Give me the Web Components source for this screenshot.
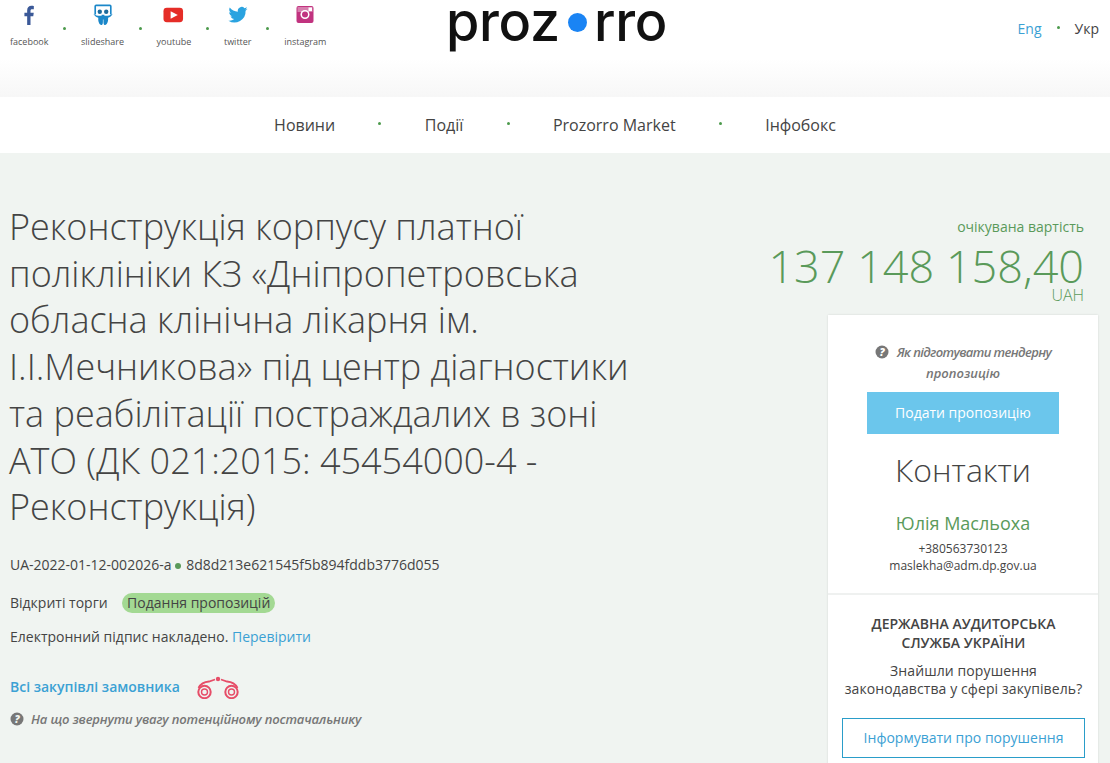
<!doctype html>
<html lang="uk">
<head>
<meta charset="utf-8">
<title>Prozorro</title>
<style>
html, body { margin: 0; height: 763px; overflow: hidden; }
body { font-family: "Open Sans", "Noto Sans", sans-serif; color: #444; background: #f0f4f1; }
</style>
</head>
<body>
<pz-header></pz-header>
<pz-nav></pz-nav>
<pz-page>
    <pz-tender></pz-tender>
    <pz-side slot="side"></pz-side>
</pz-page>

<script>
const ICONS = {
    facebook: `<svg width="20" height="24" viewBox="0 0 24 24"><path fill="#3b5998" d="M13.8 24V13.6h3.3l.6-4.2h-3.900V7c0-1.200.4-2 2-2h2V1.300C17.400 1.200 16.300 1 14.900 1c-3 0-5.100 1.900-5.100 5.200v3.200H6.500v4.200h3.300V24z"/></svg>`,
    slideshare: `<svg width="22" height="24" viewBox="0 0 24 24"><path fill="none" stroke="#1b87c9" stroke-width="1.800" d="M3.500 11.500V2.500q0-1 1-1h15q1 0 1 1v9"/><path fill="#1b87c9" d="M1.500 10.500c3 2.500 6 2.500 9 2.300v-1h3v1c3 .2 6-.2 9-2.300-1 2.500-3 4-5 4.500 .4 3-.4 7-3 8-1.500 0-2-1-2-4v-2h-.6v2c0 3-.5 4-2 4-2.600-1-3.400-5-3-8-2-.5-4-2-5.400-4.500z"/><circle cx="8.500" cy="8.500" r="2.400" fill="#1b6a9c"/><circle cx="15.500" cy="8.500" r="2.400" fill="#1b6a9c"/></svg>`,
    youtube: `<svg width="21" height="24" viewBox="0 0 22 24"><rect x="0.500" y="4.500" width="20.500" height="15" rx="3.500" fill="#e52d27"/><path fill="#fff" d="M8 8l7.500 4L8 16z"/></svg>`,
    twitter: `<svg width="20" height="24" viewBox="0 0 24 24"><path fill="#2aa3e0" d="M23.500 4.500c-.8.400-1.700.6-2.700.8 1-.6 1.700-1.500 2-2.600-.9.500-1.900.9-3 1.100A4.700 4.700 0 0 0 11.800 8C7.900 7.800 4.400 6 2.100 3.100c-1.300 2.200-.6 4.900 1.400 6.300-.8 0-1.500-.2-2.100-.6 0 2.300 1.600 4.200 3.800 4.700-.7.200-1.400.2-2.100.1.600 1.900 2.300 3.200 4.400 3.300A9.500 9.500 0 0 1 .5 18.800a13.400 13.400 0 0 0 20.600-11.900c1-.6 1.800-1.500 2.400-2.400z"/></svg>`,
    instagram: `<svg width="20" height="24" viewBox="0 0 20 24"><rect x="1.500" y="3" width="17" height="17" rx="2" fill="#c1337f"/><rect x="2.500" y="4" width="15" height="5" fill="#d77fae"/><circle cx="10" cy="11.500" r="4.500" fill="#fff"/><circle cx="10" cy="11.500" r="3" fill="#c1337f"/><rect x="13.500" y="4.500" width="3.500" height="3.500" fill="#fff"/></svg>`,
    question: `<svg width="14" height="14" viewBox="0 0 14 14"><circle cx="7" cy="7" r="6.500" fill="#777"/><text x="7" y="10.600" text-anchor="middle" font-family="'Open Sans', sans-serif" font-weight="800" font-size="10.500" fill="#f0f4f1">?</text></svg>`,
    binoculars: `<svg width="42" height="24" viewBox="0 0 42 24" fill="none" stroke="#e64d68"><circle cx="7.500" cy="17" r="6.200" stroke-width="2"/><circle cx="7.500" cy="17" r="3" stroke-width="1.400"/><circle cx="34.500" cy="17" r="6.200" stroke-width="2"/><circle cx="34.500" cy="17" r="3" stroke-width="1.400"/><path stroke-width="1.800" d="M1.500 13Q4.500 7 12 6.500L18 4.500M40.500 13Q37.500 7 30 6.500L24 4.500"/><circle cx="21" cy="4" r="2.200" fill="#e64d68" stroke="none"/></svg>`
};

class PzHeader extends HTMLElement {
    constructor() {
        super();
        this.attachShadow({ mode: 'open' });
        this.shadowRoot.innerHTML = `
<style>
:host { display: grid; grid-template-columns: 1fr auto 1fr; align-items: start; height: 97px; background: linear-gradient(#fff 60%, #f7f7f7); }
.dot { width: 3px; height: 3px; border-radius: 50%; background: #4c9a4c; flex: none; }
.social { display: flex; padding: 3px 0 0 10px; }
.social .dot { margin: 24px 14.800px 0; }
.item { display: flex; flex-direction: column; align-items: center; font-size: 9px; line-height: 12px; color: #555; }
.item svg { display: block; margin-bottom: 9px; }
.logo { display: flex; align-items: center; margin-left: 3px; font-family: Inter, sans-serif; font-weight: 500; font-size: 54px; line-height: 44px; letter-spacing: -0.300px; color: #111; }
.logo i { width: 19px; height: 19px; border-radius: 50%; background: #1a84f4; margin: 1px 7px 0 8px; }
.lang { display: flex; justify-content: flex-end; align-items: center; font-size: 14px; line-height: 20px; padding: 19px 11px 0 0; color: #444; }
.lang a { color: #3ba1d4; }
.lang .dot { margin: -3px 15px 0; }
</style>
<div class="social">
    <div class="item">${ICONS.facebook}facebook</div><span class="dot"></span>
    <div class="item">${ICONS.slideshare}slideshare</div><span class="dot"></span>
    <div class="item">${ICONS.youtube}youtube</div><span class="dot"></span>
    <div class="item">${ICONS.twitter}twitter</div><span class="dot"></span>
    <div class="item">${ICONS.instagram}instagram</div>
</div>
<div class="logo"><span>proz</span><i></i><span>rro</span></div>
<div class="lang"><a>Eng</a><span class="dot"></span><span>Укр</span></div>`;
    }
}

class PzNav extends HTMLElement {
    constructor() {
        super();
        this.attachShadow({ mode: 'open' });
        const links = ['Новини', 'Події', 'Prozorro Market', 'Інфобокс'];
        this.shadowRoot.innerHTML = `
<style>
:host { display: flex; justify-content: center; align-items: center; height: 56px; background: #fff; font-size: 16px; color: #444; }
.dot { width: 3px; height: 3px; border-radius: 50%; background: #4c9a4c; margin: -3px 43.300px 0; }
</style>
${links.map(l => `<span>${l}</span>`).join('<span class="dot"></span>')}`;
    }
}

class PzPage extends HTMLElement {
    constructor() {
        super();
        this.attachShadow({ mode: 'open' });
        this.shadowRoot.innerHTML = `
<style>
:host { display: flex; justify-content: space-between; padding: 51px 12px 0 10px; }
</style>
<slot></slot>
<slot name="side"></slot>`;
    }
}

class PzTender extends HTMLElement {
    constructor() {
        super();
        this.attachShadow({ mode: 'open' });
        this.shadowRoot.innerHTML = `
<style>
:host { display: block; width: 640px; font-size: 14px; color: #444; }
h1 { margin: 0 0 24px -1px; font-weight: 300; font-size: 36px; line-height: 46.700px; color: #444; }
.row { line-height: 20px; }
.ids { margin-bottom: 18px; }
.ids i { display: inline-block; width: 6px; height: 6px; border-radius: 50%; background: #5a9a5a; margin: 0 1.500px 1px 0; vertical-align: middle; }
.type { display: flex; align-items: center; margin-bottom: 14px; }
.badge { margin-left: 14.500px; padding: 0 5px; background: #a3d993; border-radius: 10px; line-height: 20px; }
a { color: #3ba1d4; }
.all { display: flex; align-items: center; margin-top: 27px; height: 26px; font-weight: 600; }
.all svg { margin-left: 17px; }
.hint { display: flex; align-items: center; margin-top: 9px; font-size: 13px; line-height: 20px; font-style: italic; font-weight: 600; color: #777; letter-spacing: -0.170px; }
.hint svg { margin-right: 7px; }
</style>
<h1>Реконструкція корпусу платної поліклініки КЗ «Дніпропетровська обласна клінічна лікарня ім. І.І.Мечникова» під центр діагностики та реабілітації постраждалих в зоні АТО (ДК 021:2015: 45454000-4 - Реконструкція)</h1>
<div class="row ids">UA-2022-01-12-002026-a <i></i> 8d8d213e621545f5b894fddb3776d055</div>
<div class="row type">Відкриті торги <span class="badge">Подання пропозицій</span></div>
<div class="row">Електронний підпис накладено. <a>Перевірити</a></div>
<div class="row all"><a>Всі закупівлі замовника</a>${ICONS.binoculars}</div>
<div class="hint">${ICONS.question}На що звернути увагу потенційному постачальнику</div>`;
    }
}

class PzSide extends HTMLElement {
    constructor() {
        super();
        this.attachShadow({ mode: 'open' });
        this.shadowRoot.innerHTML = `
<style>
:host { display: block; width: 270px; margin-top: 13px; text-align: center; color: #444; }
.price { text-align: right; margin-right: 14px; color: #5a9a5a; }
.price small { display: block; font-size: 14px; line-height: 20px; }
.price b { display: block; font-weight: 300; font-size: 45px; line-height: 42px; margin: 8px 0 0 -60px; }
.price span { display: block; font-size: 16px; line-height: 16px; font-weight: 300; }
.card { margin-top: 12px; background: #fff; box-shadow: 0 0 2px rgba(0,0,0,.12); }
.top { padding: 27px 0 19px; border-bottom: 2px solid #eff1f0; }
.hint { font-size: 13px; line-height: 21px; font-style: italic; font-weight: 600; color: #777; padding: 0 30px; }
.hint span { letter-spacing: -0.600px; }
.hint svg { vertical-align: -2px; margin-right: 5px; }
.apply { display: block; width: 192px; height: 42px; line-height: 42px; margin: 8px auto 0; background: #6bc6ec; color: #fff; font-size: 14px; }
h2 { margin: 12px 0 0; font-weight: 300; font-size: 32px; line-height: 48px; color: #444; }
.name { margin-top: 16px; font-size: 18px; line-height: 26px; color: #5a9a5a; }
.contact { margin-top: 4px; font-size: 12px; line-height: 17px; }
.audit { padding: 19px 13px 40px 14px; }
.audit h3 { margin: 0; font-size: 14px; line-height: 19px; font-weight: 600; }
.audit p { margin: 10px 0 0; font-size: 14px; line-height: 18px; letter-spacing: 0.100px; }
.report { display: block; height: 38px; line-height: 38px; margin-top: 20px; border: 1px solid #2a9dc9; color: #3ba1d4; font-size: 14px; background: #fff; }
</style>
<div class="price">
    <small>очікувана вартість</small>
    <b>137 148 158,40</b>
    <span>UAH</span>
</div>
<div class="card">
    <div class="top">
        <div class="hint">${ICONS.question.replace('#f0f4f1', '#fff')} <span>Як підготувати тендерну</span> пропозицію</div>
        <a class="apply">Подати пропозицію</a>
        <h2>Контакти</h2>
        <div class="name">Юлія Масльоха</div>
        <div class="contact">+380563730123<br>maslekha@adm.dp.gov.ua</div>
    </div>
    <div class="audit">
        <h3>ДЕРЖАВНА АУДИТОРСЬКА СЛУЖБА УКРАЇНИ</h3>
        <p>Знайшли порушення законодавства у сфері закупівель?</p>
        <a class="report">Інформувати про порушення</a>
    </div>
</div>`;
    }
}

customElements.define('pz-header', PzHeader);
customElements.define('pz-nav', PzNav);
customElements.define('pz-page', PzPage);
customElements.define('pz-tender', PzTender);
customElements.define('pz-side', PzSide);
</script>
</body>
</html>
